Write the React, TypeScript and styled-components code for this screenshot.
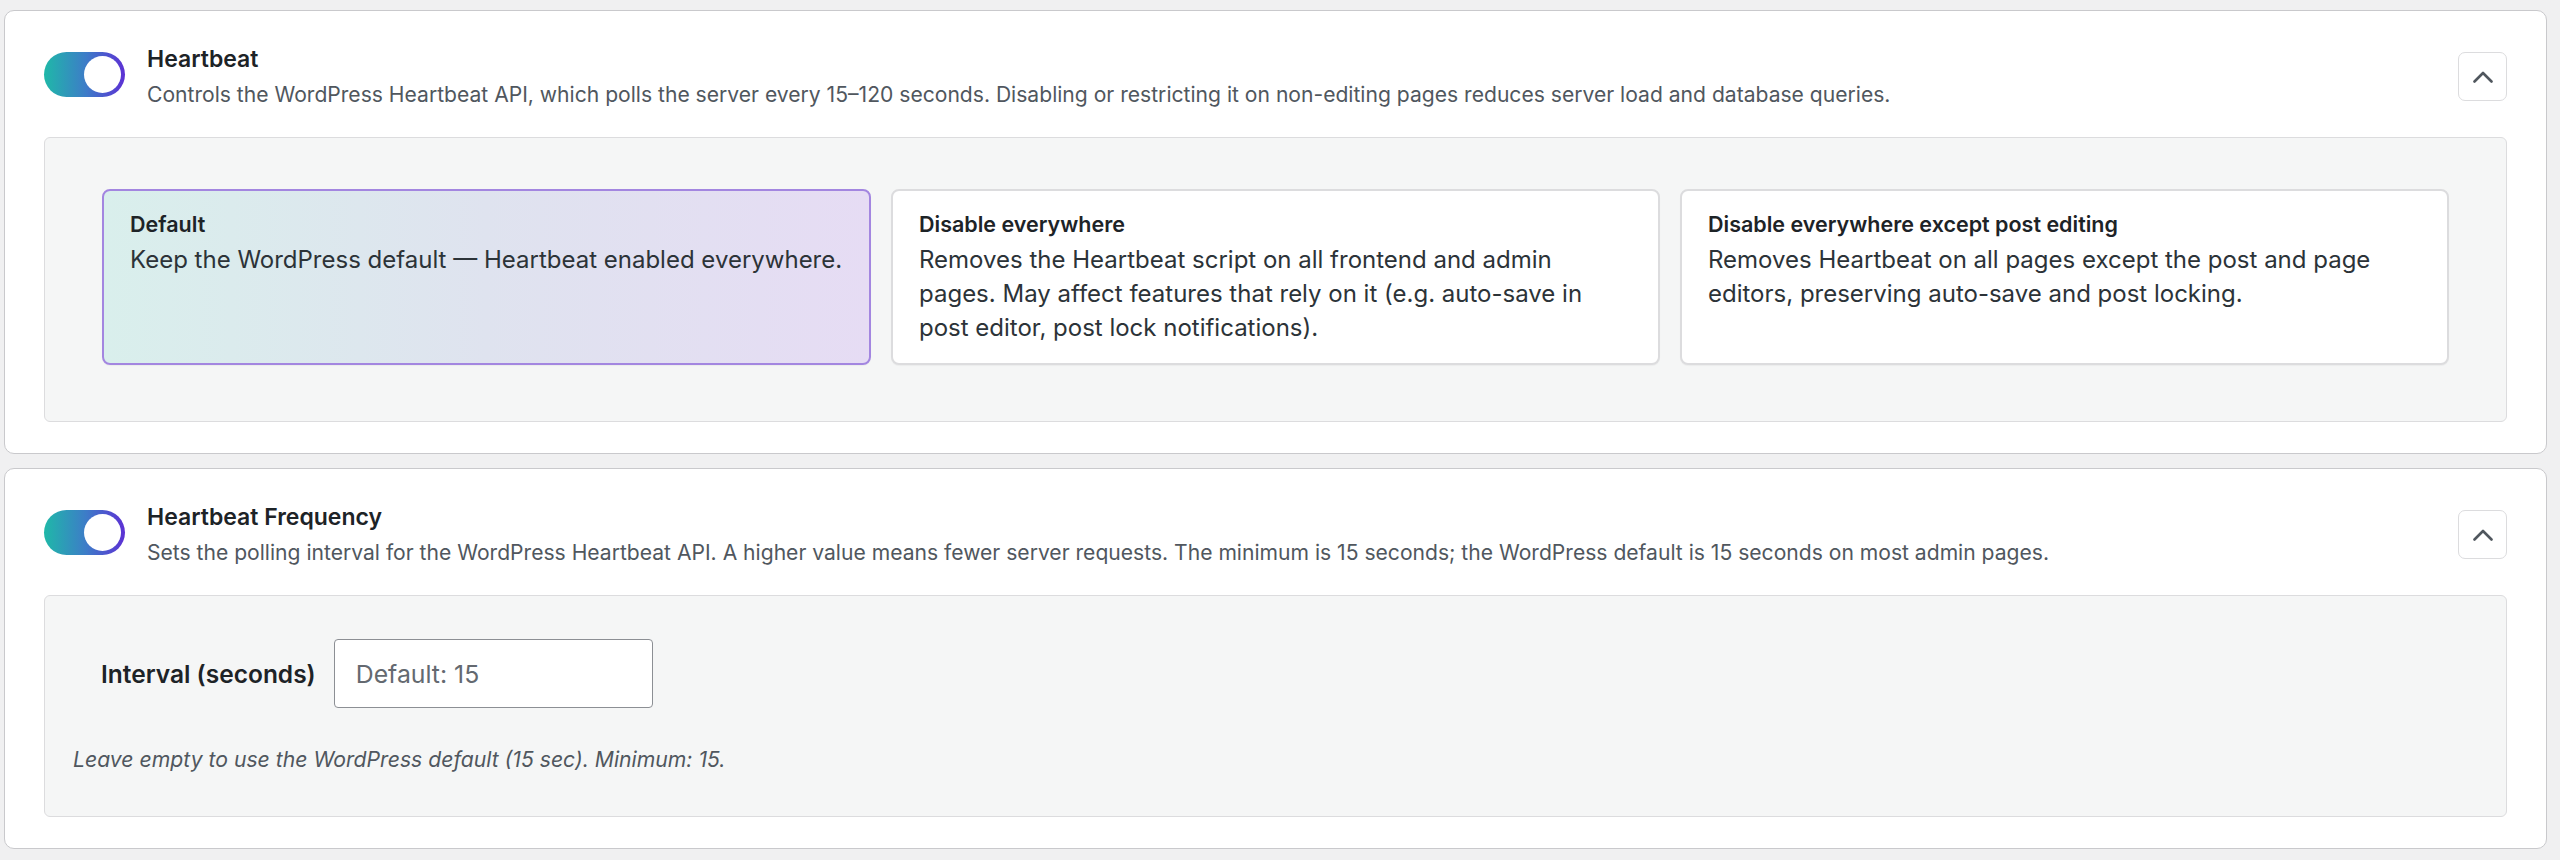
import React from "react";
import styled, { createGlobalStyle } from "styled-components";

const GlobalStyle = createGlobalStyle`
  html, body { margin: 0; padding: 0; background: #f0f0f1; }
  body {
    font-family: Inter, "Noto Sans", "Liberation Sans", sans-serif;
    -webkit-font-smoothing: antialiased;
    color: #1d2327;
  }
  *, *::before, *::after { box-sizing: border-box; }
`;

const Page = styled.div`
  display: flex;
  flex-direction: column;
  gap: 14px;
  padding: 10px 13px 10px 4px;
`;

const Card = styled.section`
  background: #fff;
  border: 1px solid #c9c9cc;
  border-radius: 10px;
  padding: 34px 39px 31px;
`;

const Header = styled.div`
  display: flex;
  align-items: flex-start;
  margin-bottom: 27px;
`;

const Toggle = styled.button`
  flex: none;
  display: flex;
  align-items: center;
  justify-content: flex-end;
  width: 81px;
  height: 45px;
  margin-top: 7px;
  padding: 0 4px;
  border: 0;
  border-radius: 23px;
  background: linear-gradient(90deg, #1fb8a8 0%, #3d7cc8 52%, #5c30d4 100%);
  cursor: pointer;
`;

const Thumb = styled.span`
  width: 37px;
  height: 37px;
  border-radius: 50%;
  background: #fff;
`;

const HeaderText = styled.div`
  flex: 1;
  margin-left: 22px;
  min-width: 0;
`;

const Title = styled.h3`
  margin: 0;
  font-size: 23px;
  line-height: 28px;
  font-weight: 600;
  color: #1d2327;
`;

const Description = styled.p`
  margin: 7px 0 0;
  font-size: 21.1px;
  line-height: 30px;
  color: #50575e;
`;

const CollapseButton = styled.button`
  flex: none;
  display: flex;
  align-items: center;
  justify-content: center;
  width: 49px;
  height: 49px;
  margin-top: 7px;
  margin-left: 24px;
  padding: 0;
  background: #fff;
  border: 1px solid #dcdcde;
  border-radius: 7px;
  color: #50575e;
  cursor: pointer;
`;

const Panel = styled.div`
  background: #f5f6f6;
  border: 1px solid #dcdcde;
  border-radius: 6px;
`;

const OptionsPanel = styled(Panel)`
  padding: 51px 57px 56px;
`;

const OptionGrid = styled.div`
  display: grid;
  grid-template-columns: repeat(3, 1fr);
  gap: 20px;
`;

const Option = styled.div<{ $selected?: boolean }>`
  border-radius: 8px;
  padding: 19px 26px 18px;
  border: 2px solid ${(p) => (p.$selected ? "#a386e0" : "#dcdcde")};
  background: ${(p) =>
    p.$selected
      ? "linear-gradient(90deg, #d9efec 0%, #dfe3ef 50%, #e6dcf4 100%)"
      : "#fff"};
  box-shadow: 0 1px 1px rgba(0, 0, 0, 0.04);
  cursor: pointer;
`;

const OptionTitle = styled.div`
  font-size: 21.5px;
  line-height: 28px;
  font-weight: 600;
  color: #1d2327;
  margin-bottom: 5px;
`;

const OptionText = styled.div`
  font-size: 24px;
  line-height: 34px;
  color: #2c3338;
`;

const FieldPanel = styled(Panel)`
  padding: 43px 28px 43px;
`;

const FieldRow = styled.div`
  display: flex;
  align-items: center;
  gap: 18px;
  padding-left: 28px;
`;

const FieldLabel = styled.label`
  font-size: 24.5px;
  font-weight: 600;
  color: #1d2327;
`;

const NumberInput = styled.input`
  width: 319px;
  height: 69px;
  padding: 0 21px;
  border: 1px solid #8c8f94;
  border-radius: 4px;
  background: #fff;
  font-family: inherit;
  font-size: 24.8px;
  color: #1d2327;
  &::placeholder { color: #646970; }
`;

const Note = styled.p`
  margin: 37px 0 0;
  font-size: 21.2px;
  line-height: 28px;
  font-style: italic;
  color: #50575e;
`;

const ChevronUp = () => (
  <svg width="20" height="12" viewBox="0 0 20 12" fill="none">
    <polyline
      points="1.5,10.5 10,2 18.5,10.5"
      stroke="currentColor"
      strokeWidth="2.6"
      strokeLinecap="round"
      strokeLinejoin="round"
    />
  </svg>
);

const options = [
  {
    title: "Default",
    text: "Keep the WordPress default — Heartbeat enabled everywhere.",
    selected: true,
  },
  {
    title: "Disable everywhere",
    text:
      "Removes the Heartbeat script on all frontend and admin pages. May affect features that rely on it (e.g. auto-save in post editor, post lock notifications).",
  },
  {
    title: "Disable everywhere except post editing",
    text:
      "Removes Heartbeat on all pages except the post and page editors, preserving auto-save and post locking.",
  },
];

const SectionHeader = ({ title, text }: { title: string; text: string }) => (
  <Header>
    <Toggle aria-label={`Toggle ${title}`}>
      <Thumb />
    </Toggle>
    <HeaderText>
      <Title>{title}</Title>
      <Description>{text}</Description>
    </HeaderText>
    <CollapseButton aria-label="Collapse">
      <ChevronUp />
    </CollapseButton>
  </Header>
);

export default function App() {
  return (
    <>
      <GlobalStyle />
      <Page>
        <Card>
          <SectionHeader
            title="Heartbeat"
            text="Controls the WordPress Heartbeat API, which polls the server every 15–120 seconds. Disabling or restricting it on non-editing pages reduces server load and database queries."
          />
          <OptionsPanel>
            <OptionGrid>
              {options.map((o) => (
                <Option key={o.title} $selected={o.selected}>
                  <OptionTitle>{o.title}</OptionTitle>
                  <OptionText>{o.text}</OptionText>
                </Option>
              ))}
            </OptionGrid>
          </OptionsPanel>
        </Card>
        <Card>
          <SectionHeader
            title="Heartbeat Frequency"
            text="Sets the polling interval for the WordPress Heartbeat API. A higher value means fewer server requests. The minimum is 15 seconds; the WordPress default is 15 seconds on most admin pages."
          />
          <FieldPanel>
            <FieldRow>
              <FieldLabel htmlFor="hb-interval">Interval (seconds)</FieldLabel>
              <NumberInput id="hb-interval" type="text" placeholder="Default: 15" />
            </FieldRow>
            <Note>Leave empty to use the WordPress default (15 sec). Minimum: 15.</Note>
          </FieldPanel>
        </Card>
      </Page>
    </>
  );
}
